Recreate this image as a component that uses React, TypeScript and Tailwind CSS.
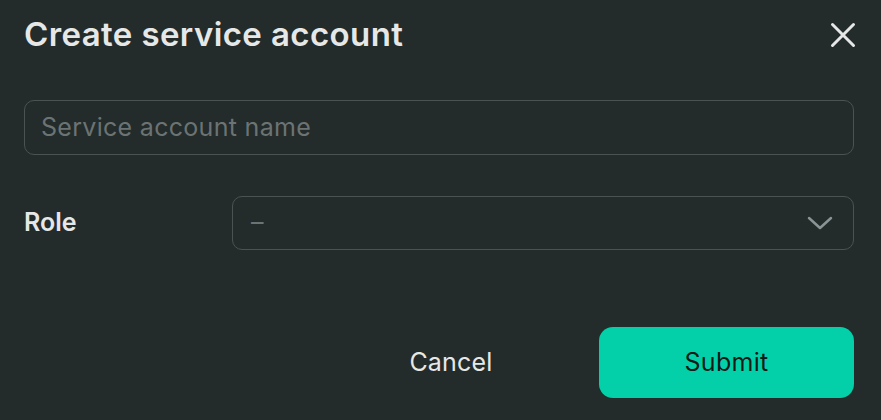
import React from "react";

export default function App() {
  return (
    <div className="w-[881px] h-[420px] bg-[#232b2b] overflow-hidden" style={{ fontFamily: "Inter, 'Noto Sans', sans-serif" }}>
      <div className="flex items-center justify-between pl-6 pr-[25px] h-[70px]">
        <h1 className="text-[33px] font-semibold text-[#e6e8e8] tracking-[0.4px]">
          Create service account
        </h1>
        <svg width="26" height="26" viewBox="0 0 26 26">
          <path d="M2.5 2.5 L23.5 23.5 M23.5 2.5 L2.5 23.5" stroke="#e6e8e8" strokeWidth="3" strokeLinecap="round" />
        </svg>
      </div>
      <div className="pl-6 pr-[27px] mt-[30px]">
        <div className="h-[55px] rounded-[10px] border border-[#4a5252] flex items-center px-4">
          <span className="text-[25px] tracking-[0.3px] text-[#6c7373]">Service account name</span>
        </div>
        <div className="flex items-center mt-[41px]">
          <div className="w-[208px] text-[25px] font-semibold text-[#e6e8e8]">Role</div>
          <div className="flex-1 h-[54px] rounded-[10px] border border-[#4a5252] flex items-center justify-between pl-[18px] pr-[20px]">
            <span className="text-[25px] text-[#6c7373]">–</span>
            <svg width="26" height="16" viewBox="0 0 26 16">
              <path d="M2 3 L13 13 L24 3" stroke="#8b9494" strokeWidth="2.5" fill="none" strokeLinecap="round" strokeLinejoin="round" />
            </svg>
          </div>
        </div>
        <div className="flex justify-end items-center mt-[77px] gap-[24px]">
          <button className="w-[248px] h-[71px] text-[25px] tracking-[0.2px] text-[#e6e8e8]">Cancel</button>
          <button className="w-[255px] h-[71px] rounded-[14px] bg-[#03d0a8] text-[25px] tracking-[0.3px] text-[#0f1a18]">Submit</button>
        </div>
      </div>
    </div>
  );
}
